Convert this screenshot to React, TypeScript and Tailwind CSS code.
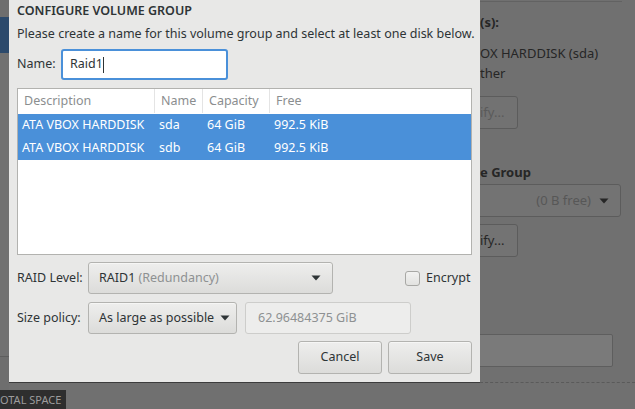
import React from "react";

const font = { fontFamily: '"Noto Sans", "DejaVu Sans", sans-serif' };

function Arrow({ className = "" }: { className?: string }) {
  return (
    <svg width="10" height="6" viewBox="0 0 10 6" className={className}>
      <path d="M0.5 0.5 L9.5 0.5 L5 5.5 Z" fill="currentColor" />
    </svg>
  );
}

function Btn({ children, className = "" }: { children: React.ReactNode; className?: string }) {
  return (
    <div
      className={
        "flex items-center rounded-[3px] border border-[#b3b3b0] bg-gradient-to-b from-[#eeeeed] to-[#dcdcda] shadow-[inset_0_1px_0_#f6f6f5] " +
        className
      }
    >
      {children}
    </div>
  );
}

export default function App() {
  return (
    <div className="relative w-[635px] h-[409px] overflow-hidden bg-[#707070] text-[12.5px]" style={font}>
      {/* background */}
      <div className="flex h-full">
        <div className="w-[9px] shrink-0 flex flex-col">
          <div className="h-[17px] shrink-0 bg-[#6e6e6e]" />
          <div className="h-[36px] shrink-0 bg-[#2c4a6c]" />
          <div className="h-[304px] shrink-0 bg-[#717171] border-b border-[#5e5e5e]" />
          <div className="flex-1 bg-[#6e6e6e]" />
        </div>
        <div className="w-[461px] shrink-0" />
        <div className="flex-1 flex flex-col text-[#262626] text-[13px]">
          <div className="ml-[10px] mr-[13px] h-[1px] mt-[1px] bg-[#626262]" />
          <div className="ml-[10px] mt-[11px] h-[18px] font-bold leading-[18px]">(s):</div>
          <div className="ml-[10px] mt-[13px] leading-[18px]">OX HARDDISK (sda)</div>
          <div className="ml-[10px] mt-[2px] leading-[18px]">ther</div>
          <div className="mt-[14px] w-[48px] h-[33px] rounded-[3px] border border-[#5c5c5c] bg-[#727272] flex items-center pl-[9px] text-[#5a5a5a]">
            ify...
          </div>
          <div className="ml-[10px] mt-[34px] h-[18px] font-bold leading-[18px]">e Group</div>
          <div className="mt-[3px] w-[151px] h-[33px] rounded-[3px] border border-[#5c5c5c] bg-[#737373] flex items-center justify-end pr-[11px] gap-[8px] text-[#575757]">
            <span>(0 B free)</span>
            <Arrow className="text-[#262626]" />
          </div>
          <div className="mt-[7px] w-[48px] h-[33px] rounded-[3px] border border-[#5c5c5c] bg-[#737373] flex items-center pl-[9px] text-[#262626]">
            ify...
          </div>
          <div className="mt-[77px] w-[143px] h-[33px] rounded-[2px] border border-[#5e5e5e] bg-[#7a7a7a]" />
          <div className="ml-[10px] mt-[15px] border-t border-dashed border-[#5a5a5a]" />
        </div>
      </div>

      {/* TOTAL SPACE tab */}
      <div className="absolute left-0 top-[390px] w-[66px] h-[19px] bg-[#2e2e2e] text-[11px] text-[#9c9c9c] leading-[20px] overflow-hidden whitespace-nowrap">
        OTAL SPACE
      </div>

      {/* dialog */}
      <div className="absolute left-[9px] top-0 w-[471px] h-[383px] bg-[#e8e8e7] border-b border-[#3c3c3c] text-[#2e3436] px-[8px] flex flex-col">
        <div className="mt-[1px] h-[20px] leading-[20px] font-semibold text-[12.5px]">CONFIGURE VOLUME GROUP</div>
        <div className="mt-[4px] h-[18px] leading-[18px] whitespace-nowrap">
          Please create a name for this volume group and select at least one disk below.
        </div>
        <div className="mt-[6px] flex items-center">
          <span className="w-[44px]">Name:</span>
          <div className="w-[167px] h-[31px] rounded-[3px] border-2 border-[#4a90d9] bg-white flex items-center pl-[7px]">
            <span>Raid1</span>
            <span className="w-[1px] h-[16px] bg-[#2e3436]" />
          </div>
        </div>
        <div className="mt-[8px] h-[167px] border border-[#b2b2af] bg-white flex flex-col">
          <div className="flex h-[24px] text-[#8b8e8f] items-stretch">
            <div className="w-[137px] pl-[6px] flex items-center border-r border-[#e4e4e4]">Description</div>
            <div className="w-[48px] pl-[6px] flex items-center border-r border-[#e4e4e4]">Name</div>
            <div className="w-[67px] pl-[6px] flex items-center border-r border-[#e4e4e4]">Capacity</div>
            <div className="flex-1 pl-[6px] flex items-center">Free</div>
          </div>
          {["sda", "sdb"].map((n, i) => (
            <div key={n} className={"flex h-[23px] items-center bg-[#4a90d9] text-white" + (i === 0 ? " mt-[1px]" : "")}>
              <div className="w-[137px] pl-[4px] whitespace-nowrap">ATA VBOX HARDDISK</div>
              <div className="w-[48px] pl-[4px]">{n}</div>
              <div className="w-[67px] pl-[4px]">64 GiB</div>
              <div className="flex-1 pl-[4px]">992.5 KiB</div>
            </div>
          ))}
        </div>
        <div className="mt-[7px] flex items-center">
          <span className="w-[71px]">RAID Level:</span>
          <Btn className="w-[245px] h-[32px] pl-[10px] pr-[11px] justify-between">
            <span>
              RAID1 <span className="text-[#8e9192]">(Redundancy)</span>
            </span>
            <Arrow />
          </Btn>
          <div className="ml-[72px] flex items-center gap-[6px]">
            <div className="w-[15px] h-[15px] rounded-[3px] border border-[#a8a8a5] bg-gradient-to-b from-[#f2f2f1] to-[#e2e2e0]" />
            <span>Encrypt</span>
          </div>
        </div>
        <div className="mt-[8px] flex items-center">
          <span className="w-[71px]">Size policy:</span>
          <Btn className="w-[149px] h-[32px] pl-[10px] gap-[6px]">
            <span className="whitespace-nowrap">As large as possible</span>
            <Arrow />
          </Btn>
          <div className="ml-[8px] w-[166px] h-[32px] rounded-[3px] border border-[#cdcdcb] bg-[#ededec] flex items-center pl-[12px] text-[#8e9192]">
            62.96484375 GiB
          </div>
        </div>
        <div className="mt-[7px] flex justify-end gap-[6px]">
          <Btn className="w-[84px] h-[33px] justify-center">Cancel</Btn>
          <Btn className="w-[84px] h-[33px] justify-center">Save</Btn>
        </div>
      </div>
    </div>
  );
}
